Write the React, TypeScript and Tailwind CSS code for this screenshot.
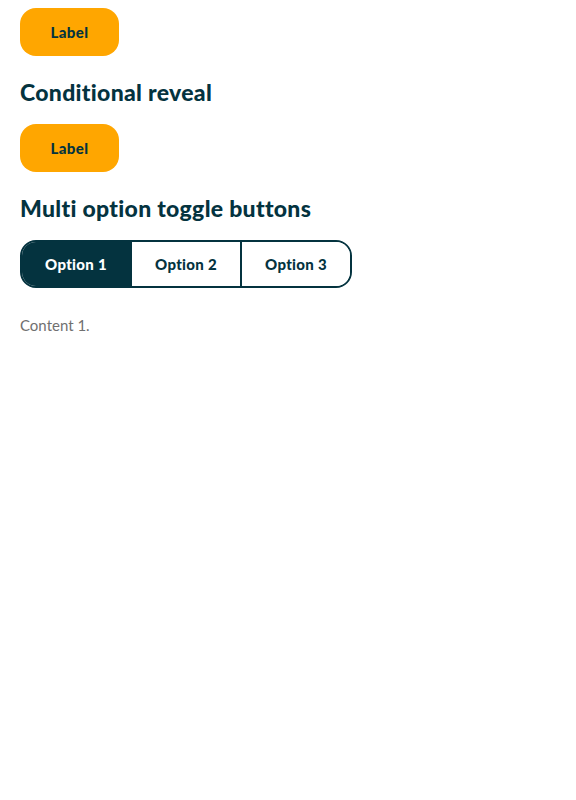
import React, { useState } from "react";

const options = ["Option 1", "Option 2", "Option 3"];

const LabelButton: React.FC = () => (
  <button className="w-[99px] h-12 rounded-2xl bg-[#ffa600] text-[#04333f] text-[15px] tracking-[0.4px] font-black">
    Label
  </button>
);

const App: React.FC = () => {
  const [active, setActive] = useState(0);

  return (
    <div className="px-5 pt-2 font-['Lato',sans-serif] text-[#04333f]">
      <LabelButton />

      <h2 className="mt-6 text-[23px] leading-6 tracking-[0.3px] font-black">Conditional reveal</h2>
      <div className="mt-5">
        <LabelButton />
      </div>

      <h2 className="mt-6 text-[23px] leading-6 tracking-[0.3px] font-black">Multi option toggle buttons</h2>

      {/* Toggle group */}
      <div className="mt-5 flex w-[332px] h-12 border-2 border-[#04333f] rounded-2xl overflow-hidden">
        {options.map((opt, i) => (
          <button
            key={opt}
            onClick={() => setActive(i)}
            className={`flex-1 text-[15px] tracking-[0.3px] font-black ${i > 0 ? "border-l-2 border-[#04333f]" : ""} ${
              active === i ? "bg-[#04333f] text-white" : "bg-white text-[#04333f]"
            }`}
          >
            {opt}
          </button>
        ))}
      </div>

      <p className="mt-[26px] text-[15px] text-[#707070]">Content {active + 1}.</p>
    </div>
  );
};

export default App;
